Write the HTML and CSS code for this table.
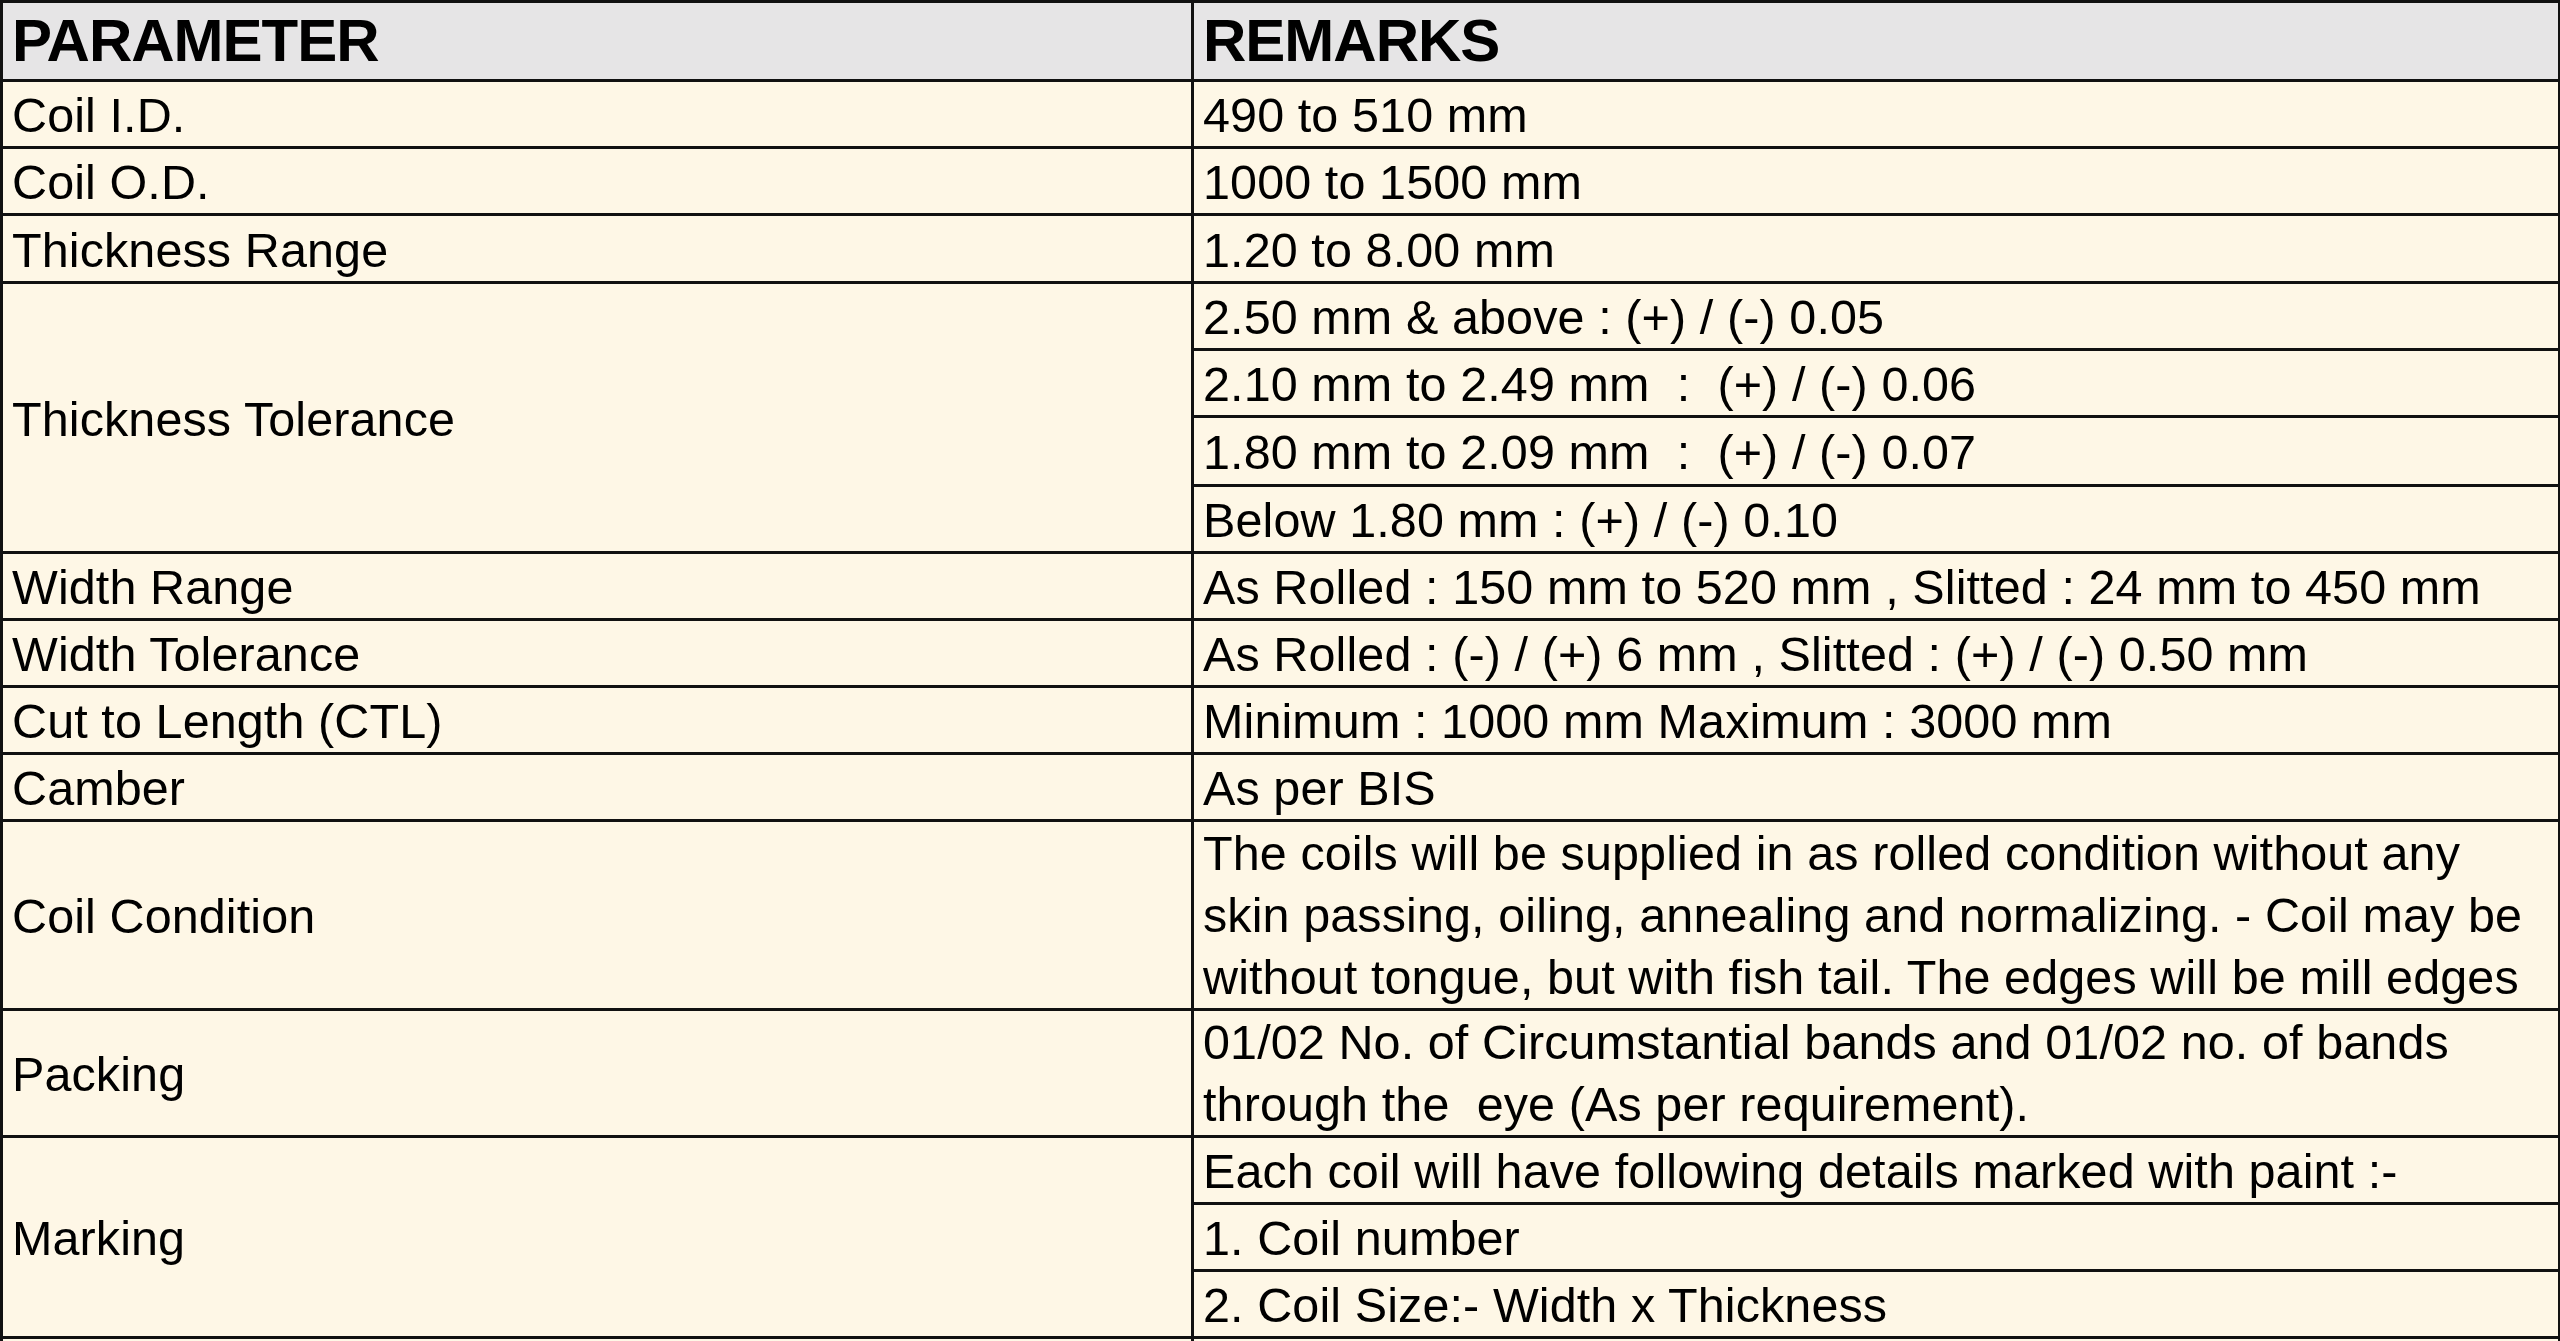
FILE: index.html
```html
<!DOCTYPE html>
<html lang="en">
<head>
<meta charset="utf-8">
<title>Coil Specification</title>
<link rel="stylesheet" href="styles.css">
</head>
<body>
<table class="spec">
  <colgroup>
    <col class="col-param">
    <col class="col-remark">
  </colgroup>
  <thead>
    <tr class="head-row">
      <th>PARAMETER</th>
      <th>REMARKS</th>
    </tr>
  </thead>
  <tbody>
    <tr class="row"><td>Coil I.D.</td><td>490 to 510 mm</td></tr>
    <tr class="row"><td>Coil O.D.</td><td>1000 to 1500 mm</td></tr>
    <tr class="row tall"><td>Thickness Range</td><td>1.20 to 8.00 mm</td></tr>
    <tr class="row"><td rowspan="4">Thickness Tolerance</td><td>2.50 mm &amp; above : (+) / (-) 0.05</td></tr>
    <tr class="row"><td>2.10 mm to 2.49 mm &nbsp;: &nbsp;(+) / (-) 0.06</td></tr>
    <tr class="row tall-2"><td>1.80 mm to 2.09 mm &nbsp;: &nbsp;(+) / (-) 0.07</td></tr>
    <tr class="row"><td>Below 1.80 mm : (+) / (-) 0.10</td></tr>
    <tr class="row"><td>Width Range</td><td>As Rolled : 150 mm to 520 mm , Slitted : 24 mm to 450 mm</td></tr>
    <tr class="row"><td>Width Tolerance</td><td>As Rolled : (-) / (+) 6 mm , Slitted : (+) / (-) 0.50 mm</td></tr>
    <tr class="row"><td>Cut to Length (CTL)</td><td>Minimum : 1000 mm Maximum : 3000 mm</td></tr>
    <tr class="row"><td>Camber</td><td>As per BIS</td></tr>
    <tr class="row-3"><td>Coil Condition</td><td class="wrap">The coils will be supplied in as rolled condition without any<br>skin passing, oiling, annealing and normalizing. - Coil may be<br>without tongue, but with fish tail. The edges will be mill edges</td></tr>
    <tr class="row-2"><td>Packing</td><td class="wrap">01/02 No. of Circumstantial bands and 01/02 no. of bands<br>through the &nbsp;eye (As per requirement).</td></tr>
    <tr class="row"><td rowspan="3">Marking</td><td>Each coil will have following details marked with paint :-</td></tr>
    <tr class="row"><td>1. Coil number</td></tr>
    <tr class="row"><td>2. Coil Size:- Width x Thickness</td></tr>
    <tr class="row"><td></td><td></td></tr>
  </tbody>
</table>
</body>
</html>
```

FILE: styles.css
```css
html, body {
  margin: 0;
  padding: 0;
  background: #fef7e6;
  overflow: hidden;
}

.spec {
  border-collapse: collapse;
  table-layout: fixed;
  width: 2558px;
  margin: 0;
  font-family: "Liberation Sans", Arial, sans-serif;
  color: #000;
  background: #fef7e6;
}

.col-param { width: 1191px; }
.col-remark { width: 1367px; }

.spec th,
.spec td {
  border: 3px solid #111;
  padding: 0 0 0 9px;
  text-align: left;
  vertical-align: middle;
  white-space: nowrap;
  overflow: hidden;
}

.spec th {
  background: #e6e5e6;
  font-weight: bold;
  font-size: 60px;
  letter-spacing: -1px;
  height: 76px;
  line-height: 62px;
}

.spec td {
  font-size: 48.5px;
  letter-spacing: 0.1px;
  line-height: 56px;
  padding-top: 2px;
}

.row td { height: 62px; }
.row.tall td { height: 63px; }
.row.tall-2 td { height: 64px; }
.row-3 td { height: 184px; }
.row-2 td { height: 122px; }

.spec td.wrap {
  line-height: 62px;
  padding-top: 0;
  padding-bottom: 0;
}
```
